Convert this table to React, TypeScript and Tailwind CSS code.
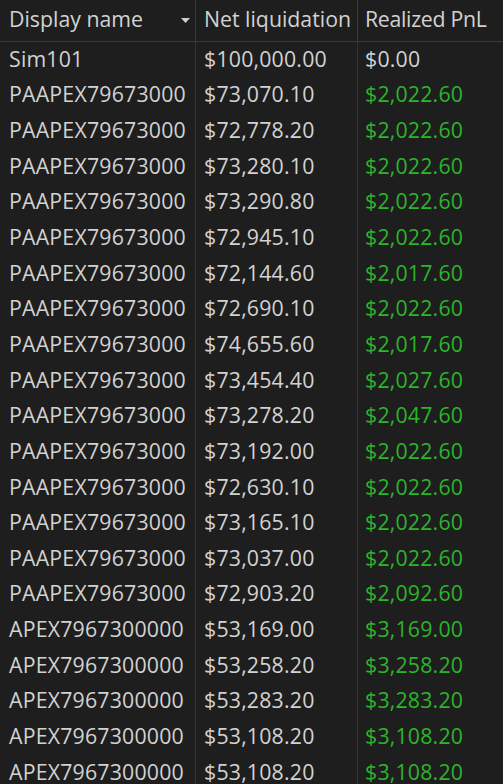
const rows: [string, string, string][] = [
  ['Sim101', '$100,000.00', '$0.00'],
  ['PAAPEX79673000', '$73,070.10', '$2,022.60'],
  ['PAAPEX79673000', '$72,778.20', '$2,022.60'],
  ['PAAPEX79673000', '$73,280.10', '$2,022.60'],
  ['PAAPEX79673000', '$73,290.80', '$2,022.60'],
  ['PAAPEX79673000', '$72,945.10', '$2,022.60'],
  ['PAAPEX79673000', '$72,144.60', '$2,017.60'],
  ['PAAPEX79673000', '$72,690.10', '$2,022.60'],
  ['PAAPEX79673000', '$74,655.60', '$2,017.60'],
  ['PAAPEX79673000', '$73,454.40', '$2,027.60'],
  ['PAAPEX79673000', '$73,278.20', '$2,047.60'],
  ['PAAPEX79673000', '$73,192.00', '$2,022.60'],
  ['PAAPEX79673000', '$72,630.10', '$2,022.60'],
  ['PAAPEX79673000', '$73,165.10', '$2,022.60'],
  ['PAAPEX79673000', '$73,037.00', '$2,022.60'],
  ['PAAPEX79673000', '$72,903.20', '$2,092.60'],
  ['APEX7967300000', '$53,169.00', '$3,169.00'],
  ['APEX7967300000', '$53,258.20', '$3,258.20'],
  ['APEX7967300000', '$53,283.20', '$3,283.20'],
  ['APEX7967300000', '$53,108.20', '$3,108.20'],
  ['APEX7967300000', '$53,108.20', '$3,108.20'],
]

export default function App() {
  return (
    <div className="h-[784px] w-[503px] overflow-hidden bg-[#1e1e1e] font-['Open_Sans',sans-serif] text-[21.3px] text-[#d2d2d2]">
      <div className="grid h-[42px] grid-cols-[196px_162px_1fr] border-b border-[#3a3a3a]">
        <div className="flex items-center justify-between border-r border-[#3a3a3a] pb-[3px] pl-[9px] pr-[5px]">
          <span>Display name</span>
          <svg width="9" height="6" viewBox="0 0 9 6" className="mt-[4px]">
            <path d="M0 0h9L4.5 5z" fill="#cfcfcf" />
          </svg>
        </div>
        <div className="flex items-center border-r border-[#3a3a3a] pb-[3px] pl-[8px]">Net liquidation</div>
        <div className="flex items-center pb-[3px] pl-[7px] tracking-[-0.3px]">Realized PnL</div>
      </div>
      {rows.map(([name, net, pnl], i) => (
        <div key={i} className="grid h-[35.65px] grid-cols-[196px_162px_1fr] tracking-[0.2px]">
          <div className="flex items-center overflow-hidden whitespace-nowrap border-r border-[#333333] pb-[2px] pl-[9px]">{name}</div>
          <div className="flex items-center border-r border-[#333333] pb-[2px] pl-[8px]">{net}</div>
          <div className={`flex items-center pb-[2px] pl-[7px] ${pnl === '$0.00' ? 'text-[#d2d2d2]' : 'text-[#2bb52b]'}`}>{pnl}</div>
        </div>
      ))}
    </div>
  )
}
